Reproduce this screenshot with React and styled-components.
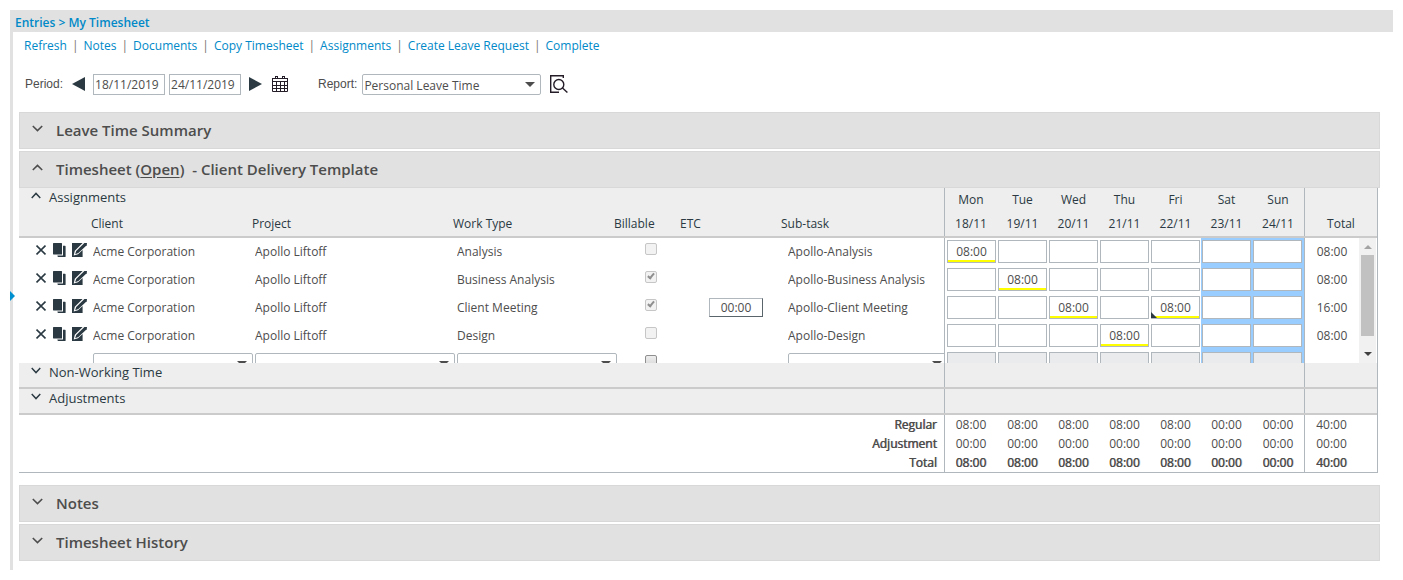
import React from "react"
import styled, { createGlobalStyle, css } from "styled-components"

const GlobalStyle = createGlobalStyle`
  * {
    box-sizing: border-box;
  }

  body {
    margin: 0;
    background: #fff;
    color: #4d4d4d;
    font: 13px/18px "Open Sans", sans-serif;
  }

  button, input, select {
    font: inherit;
    color: inherit;
  }
`

const Page = styled.div`
  padding: 10px;
`

const Shell = styled.div`
  position: relative;
  border-left: 3px solid #e1e1e1;
  padding-bottom: 7px;
`

const PanelHandle = styled.button`
  position: absolute;
  left: -3px;
  top: 281px;
  width: 5px;
  height: 10px;
  padding: 0;
  border: 0;
  background: #0090d0;
  clip-path: polygon(0 0, 100% 50%, 0 100%);
`

const Breadcrumb = styled.nav`
  height: 22px;
  padding-left: 2px;
  background: #e1e1e1;
  color: #0089c8;
  font-size: 12px;
  line-height: 25px;
  font-weight: 600;
  white-space: pre;
`

const Link = styled.a`
  color: #0089c8;
  text-decoration: none;
`

const Menu = styled.nav`
  display: flex;
  gap: 5px;
  padding: 5px 11px;
  font-size: 12px;
  color: #77736f;
`

const Toolbar = styled.div`
  display: flex;
  align-items: center;
  height: 22px;
  margin: 13px 0 17px;
  padding-left: 12px;
`

const FieldLabel = styled.label`
  font: 12px/20px "Liberation Sans", Arial, sans-serif;
`

const IconButton = styled.button`
  display: flex;
  flex: none;
  padding: 0;
  border: 0;
  background: none;
  color: #2a3942;
`

const PeriodNav = styled.div`
  display: flex;
  align-items: center;
  gap: 8px;
  margin: 0 10px 0 9px;
`

const DateGroup = styled.div`
  display: flex;
  gap: 4px;
`

const DateInput = styled.input`
  width: 72px;
  height: 21px;
  padding: 0 1px;
  border: 1px solid #b0b8bd;
  font-size: 12px;
`

const SelectBox = styled.div`
  position: relative;
  width: ${ props => props.$width }px;
  height: 21px;
  flex: none;

  &::after {
    content: "";
    position: absolute;
    right: 6px;
    top: 8px;
    border: 5px solid transparent;
    border-top-color: #4d4d4d;
    border-bottom: 0;
    pointer-events: none;
  }
`

const Select = styled.select`
  display: block;
  appearance: none;
  width: 100%;
  height: 21px;
  padding: 2px 1px 0;
  border: 1px solid #b0b8bd;
  border-radius: 2px;
  background: #fff;
  font-size: 12px;
`

const ReportField = styled.div`
  display: flex;
  align-items: center;
  gap: 5px;
  margin: 0 9px 0 30px;
`

const Sections = styled.main`
  padding: 0 13px 0 6px;
`

const SectionBar = styled.h2`
  display: flex;
  align-items: center;
  height: 37px;
  margin: 0 0 ${ props => props.$open ? 0 : 2 }px;
  padding: 0 12px 2px;
  border: 1px solid #d8d8d8;
  background: #e1e1e1;
  color: #4d4d4d;
  font-size: 15px;
  font-weight: 600;
  gap: 13px;
  white-space: pre;

  a {
    color: inherit;
    text-underline-offset: 2px;
  }

  button {
    color: #4d4d4d;
    padding-bottom: 2px;
  }
`

const Sheet = styled.div`
  margin: 0 2px 12px 0;
  border-right: 1px solid #b0b8bd;
  border-bottom: 1px solid #b0b8bd;
`

const Table = styled.table`
  width: 100%;
  table-layout: fixed;
  border-collapse: separate;
  border-spacing: 0;
  font-size: 12px;
`

const HeadTable = styled(Table)`
  background: #eee;
  color: #2a3942;
  border-bottom: 2px solid #cbcbcb;

  th {
    padding: 0;
    height: 24px;
    font-weight: 400;
    text-align: left;
    white-space: nowrap;
  }
`

const GroupHead = styled.th`
  vertical-align: top;
`

const GroupToggle = styled.button`
  display: flex;
  align-items: center;
  gap: 8px;
  padding: 0 12px;
  border: 0;
  background: none;
  color: #2a3942;
  font-size: 13px;
  line-height: 18px;

  svg {
    margin-bottom: 3px;
  }
`

const DayHead = styled.th`
  && {
    text-align: center;
  }
  border-left: ${ props => props.$first ? "1px solid #b0b8bd" : "0" };
`

const TotalHead = styled(DayHead)`
  border-left: 1px solid #b0b8bd;
`

const Scroller = styled.div`
  display: flex;
  height: 125px;
  overflow: hidden;
`

const ScrollBody = styled.div`
  flex: 1;
  min-width: 0;
`

const ScrollBar = styled.div`
  display: flex;
  flex-direction: column;
  align-items: center;
  width: 17px;
  margin-right: 1px;
  background: #f1f1f1;
`

const ScrollArrow = styled.span`
  height: 17px;
  padding-top: 7px;

  &::before {
    content: "";
    display: block;
    border: 4px solid transparent;
    ${ props => props.$up
    ? "border-bottom-color: #a3a3a3; border-top: 0;"
    : "border-top-color: #404040; border-bottom: 0;" }
  }
`

const ScrollThumb = styled.span`
  width: 13px;
  height: 81px;
  margin-bottom: 9px;
  background: #c1c1c1;
`

const BodyTable = styled(Table)`
  td {
    height: 28px;
    padding: 0;
    line-height: 28px;
    vertical-align: top;
    white-space: nowrap;
    overflow: hidden;
  }
`

const Actions = styled.div`
  display: flex;
  gap: 6px;
  padding: 5px 0 0 17px;
`

const CheckCell = styled.td`
  text-align: center;

  input {
    display: block;
    position: relative;
    appearance: none;
    width: 12px;
    height: 12px;
    margin: 5px auto 0;
    border: 1px solid #8f8f8f;
    border-radius: 2px;
    background: linear-gradient(#ededed, #d8d8d8);
  }

  input:disabled {
    border-color: #c6c6c6;
    background: #f2f2f2;
  }

  input:checked::after {
    content: "";
    position: absolute;
    left: 3px;
    top: 0;
    width: 2px;
    height: 5px;
    border: solid #8f8f8f;
    border-width: 0 2px 2px 0;
    transform: rotate(40deg);
  }
`

const SelectCell = styled.td`
  && {
    padding-top: 3px;
  }
`

const EtcInput = styled.input`
  display: block;
  width: 54px;
  height: 19px;
  margin: 4px 0 0 24px;
  padding: 0;
  border: 1px solid #b0b8bd;
  border-right-color: #5a656b;
  border-bottom-color: #5a656b;
  text-align: center;
`

const DayCell = styled.td`
  position: relative;
  border-left: ${ props => props.$first ? "1px solid #b0b8bd" : "0" };
  background: ${ props => props.$weekend ? "#99ccff" : "#fff" };

  && {
    padding: 2px 1px 0 ${ props => props.$first ? 2 : 1 }px;
  }

  ${ props => props.$note && css`
    &::after {
      content: "";
      position: absolute;
      left: 1px;
      bottom: 4px;
      width: 6px;
      height: 6px;
      background: #2a3942;
      clip-path: polygon(0 0, 100% 100%, 0 100%);
    }
  ` }
`

const DayInput = styled.input`
  display: block;
  width: 49px;
  height: 23px;
  padding: 0;
  border: 1px solid #b0b8bd;
  background: #fff;
  text-align: center;
  box-shadow: ${ props => props.$filled ? "inset 0 -2px #ffff00" : "none" };

  &:disabled {
    background: #e9ebec;
  }
`

const TotalCell = styled.td`
  text-align: center;
  border-left: 1px solid #b0b8bd;
`

const GroupTable = styled(Table)`
  background: #eee;
  border-bottom: 2px solid #cbcbcb;

  th, td {
    height: 24px;
    padding: 0;
    text-align: left;
    font-weight: 400;
  }
`

const DividedCell = styled.td`
  border-left: 1px solid #b0b8bd;
`

const SummaryTable = styled(Table)`
  th, td {
    height: 19px;
    padding: 0;
    line-height: 19px;
    font-weight: 400;
    text-align: center;
  }

  th {
    padding-right: 7px;
    text-align: right;
  }

  th, tr:last-child td {
    text-shadow: 0 0 #4d4d4d, 1px 0 rgba(77, 77, 77, 0.3);
  }

  td:nth-child(2), td:last-child {
    border-left: 1px solid #b0b8bd;
  }

  td:last-child {
    padding-right: 19px;
  }
`

const Chevron = ({ up, size = 11 }) => (
  <svg width={ size } height={ 7 } viewBox="0 0 11 7" preserveAspectRatio="none" fill="none" stroke="currentColor" strokeWidth="1.6">
    <path d={ up ? "M.8 6 5.5 1.4 10.2 6" : "M.8 1 5.5 5.6 10.2 1" } />
  </svg>
)

const DeleteIcon = () => (
  <svg width="10" height="14" viewBox="0 0 10 14" stroke="currentColor" strokeWidth="1.7">
    <path d="M.5 2.5 9.5 11.5M9.5 2.5.5 11.5" />
  </svg>
)

const CopyIcon = () => (
  <svg width="14" height="14" viewBox="0 0 14 14" fill="currentColor">
    <path d="M1 .5Q1 0 1.5 0H9.5Q10 0 10 .5V11.4H1.5Q1 11.4 1 11Z" />
    <path d="M11 2.8H13Q13.6 2.8 13.6 3.4V13.4Q13.6 14 13 14H6.5Q5.4 14 5.4 12.5H11Z" />
  </svg>
)

const EditIcon = () => (
  <svg width="15" height="14" viewBox="0 0 15 14" fill="currentColor">
    <path d="M0 0H10.6L2.8 7.8 1.7 12.6 6 11.2 10.6 7V14H0Z" />
    <path d="M12.4 0H15L14.7 2.2 6.4 10 3.2 11.2 4.2 8Z" />
  </svg>
)

const CalendarIcon = () => (
  <svg width="16" height="16" viewBox="0 0 16 16" fill="none" stroke="#241d28">
    <path d="M.5 2V15.5H15.5V2M0 2.5H16M0 5.5H16M0 9.5H16M0 12.5H16M4.5 6V15M8.5 6V15M12.5 6V15" />
    <path d="M3.5 0V3M5.5 0V3M10.5 0V3M12.5 0V3M3 .5H6M10 .5H13" />
  </svg>
)

const PreviewIcon = () => (
  <svg width="18" height="18" viewBox="0 0 18 18" fill="none" stroke="#241d28" strokeWidth="1.4">
    <path d="M13.3 3V.7H.7V17.3H9" />
    <circle cx="8.8" cy="9.5" r="5" />
    <path d="M12.5 13 17.4 17.5" />
  </svg>
)

const menu = ["Refresh", "Notes", "Documents", "Copy Timesheet", "Assignments", "Create Leave Request", "Complete"]

const days = [
  ["Mon", "18/11"], ["Tue", "19/11"], ["Wed", "20/11"], ["Thu", "21/11"],
  ["Fri", "22/11"], ["Sat", "23/11"], ["Sun", "24/11"]
]

const rows = [
  { workType: "Analysis", hours: { 0: "08:00" }, total: "08:00" },
  { workType: "Business Analysis", billable: true, hours: { 1: "08:00" }, total: "08:00" },
  { workType: "Client Meeting", billable: true, etc: "00:00", hours: { 2: "08:00", 4: "08:00" }, note: 4, total: "16:00" },
  { workType: "Design", hours: { 3: "08:00" }, total: "08:00" }
]

const summary = [
  ["Regular", "08:00", "08:00", "08:00", "08:00", "08:00", "00:00", "00:00", "40:00"],
  ["Adjustment", "00:00", "00:00", "00:00", "00:00", "00:00", "00:00", "00:00", "00:00"],
  ["Total", "08:00", "08:00", "08:00", "08:00", "08:00", "00:00", "00:00", "40:00"]
]

const DAY_COLS = [53, 51, 51, 51, 51, 51, 52]

const Cols = ({ widths }) => (
  <colgroup>
    { widths.map((width, i) => <col key={ i } width={ width || undefined } />) }
  </colgroup>
)

const Section = ({ title, open, children }) => (
  <SectionBar $open={ open }>
    <IconButton aria-label={ `Toggle ${ title || "Timesheet" }` }><Chevron up={ open } /></IconButton>
    <span>{ title || children }</span>
  </SectionBar>
)

const AssignmentRow = ({ row }) => (
  <tr>
    <td>
      <Actions>
        <IconButton aria-label="Delete"><DeleteIcon /></IconButton>
        <IconButton aria-label="Duplicate"><CopyIcon /></IconButton>
        <IconButton aria-label="Edit"><EditIcon /></IconButton>
      </Actions>
    </td>
    <td>Acme Corporation</td>
    <td>Apollo Liftoff</td>
    <td>{ row.workType }</td>
    <CheckCell>
      <input type="checkbox" aria-label="Billable" disabled defaultChecked={ row.billable } />
    </CheckCell>
    <td>{ row.etc && <EtcInput aria-label="ETC" defaultValue={ row.etc } /> }</td>
    <td>Apollo-{ row.workType }</td>
    { days.map(([day], i) =>
      <DayCell key={ day } $first={ i === 0 } $weekend={ i > 4 } $note={ row.note === i }>
        <DayInput aria-label={ `${ row.workType } ${ day }` } defaultValue={ row.hours[i] } $filled={ row.hours[i] } />
      </DayCell>
    ) }
    <TotalCell>{ row.total }</TotalCell>
  </tr>
)

const EmptySelect = ({ label, width }) => (
  <SelectCell>
    <SelectBox $width={ width }>
      <Select aria-label={ label }><option></option></Select>
    </SelectBox>
  </SelectCell>
)

const NewRow = () => (
  <tr>
    <td></td>
    <EmptySelect label="Client" width={ 160 } />
    <EmptySelect label="Project" width={ 200 } />
    <EmptySelect label="Work Type" width={ 160 } />
    <CheckCell><input type="checkbox" aria-label="Billable" /></CheckCell>
    <td></td>
    <EmptySelect label="Sub-task" width={ 160 } />
    { days.map(([day], i) =>
      <DayCell key={ day } $first={ i === 0 } $weekend={ i > 4 }>
        <DayInput aria-label={ `New ${ day }` } disabled />
      </DayCell>
    ) }
    <TotalCell />
  </tr>
)

const CollapsedGroup = ({ title }) => (
  <GroupTable>
    <Cols widths={ [0, 360, 73] } />
    <tbody>
      <tr>
        <GroupHead><GroupToggle><Chevron size={ 10 } />{ title }</GroupToggle></GroupHead>
        <DividedCell />
        <DividedCell />
      </tr>
    </tbody>
  </GroupTable>
)

const Timesheet = () => (
  <Sheet>
    <HeadTable>
      <Cols widths={ [72, 161, 201, 161, 66, 101, 0, ...DAY_COLS, 73] } />
      <thead>
        <tr>
          <GroupHead colSpan={ 7 }><GroupToggle><Chevron up size={ 10 } />Assignments</GroupToggle></GroupHead>
          { days.map(([day], i) => <DayHead key={ day } $first={ i === 0 }>{ day }</DayHead>) }
          <TotalHead />
        </tr>
        <tr>
          <th></th>
          <th>Client</th>
          <th>Project</th>
          <th>Work Type</th>
          <th>Billable</th>
          <th>ETC</th>
          <th>Sub-task</th>
          { days.map(([day, date], i) => <DayHead key={ day } $first={ i === 0 }>{ date }</DayHead>) }
          <TotalHead>Total</TotalHead>
        </tr>
      </thead>
    </HeadTable>
    <Scroller>
      <ScrollBody>
        <BodyTable>
          <Cols widths={ [74, 162, 202, 160, 68, 103, 0, ...DAY_COLS, 55] } />
          <tbody>
            { rows.map(row => <AssignmentRow key={ row.workType } row={ row } />) }
            <NewRow />
          </tbody>
        </BodyTable>
      </ScrollBody>
      <ScrollBar>
        <ScrollArrow $up />
        <ScrollThumb />
        <ScrollArrow />
      </ScrollBar>
    </Scroller>
    <CollapsedGroup title="Non-Working Time" />
    <CollapsedGroup title="Adjustments" />
    <SummaryTable>
      <Cols widths={ [0, ...DAY_COLS, 73] } />
      <tbody>
        { summary.map(([label, ...values]) =>
          <tr key={ label }>
            <th>{ label }</th>
            { values.map((value, i) => <td key={ i }>{ value }</td>) }
          </tr>
        ) }
      </tbody>
    </SummaryTable>
  </Sheet>
)

const App = () => (
  <Page>
    <GlobalStyle />
    <Shell>
      <Breadcrumb>
        <Link href="#entries">Entries</Link> &gt; <Link href="#timesheet">My Timesheet</Link>
      </Breadcrumb>
      <Menu>
        { menu.map((item, i) =>
          <React.Fragment key={ item }>
            { i > 0 && <span>|</span> }
            <Link href="#action">{ item }</Link>
          </React.Fragment>
        ) }
      </Menu>
      <Toolbar>
        <FieldLabel htmlFor="from">Period:</FieldLabel>
        <PeriodNav>
          <IconButton aria-label="Previous period">
            <svg width="13" height="14" fill="currentColor"><path d="M13 0V14L0 7Z" /></svg>
          </IconButton>
          <DateGroup>
            <DateInput id="from" defaultValue="18/11/2019" />
            <DateInput aria-label="To" defaultValue="24/11/2019" />
          </DateGroup>
          <IconButton aria-label="Next period">
            <svg width="13" height="14" fill="currentColor"><path d="M0 0V14L13 7Z" /></svg>
          </IconButton>
        </PeriodNav>
        <IconButton aria-label="Calendar"><CalendarIcon /></IconButton>
        <ReportField>
          <FieldLabel htmlFor="report">Report:</FieldLabel>
          <SelectBox $width={ 179 }>
            <Select id="report"><option>Personal Leave Time</option></Select>
          </SelectBox>
        </ReportField>
        <IconButton aria-label="Preview report"><PreviewIcon /></IconButton>
      </Toolbar>
      <Sections>
        <Section title="Leave Time Summary" />
        <Section open>Timesheet (<a href="#status">Open</a>)  - Client Delivery Template</Section>
        <Timesheet />
        <Section title="Notes" />
        <Section title="Timesheet History" />
      </Sections>
      <PanelHandle aria-label="Show side panel" />
    </Shell>
  </Page>
)

export default App
